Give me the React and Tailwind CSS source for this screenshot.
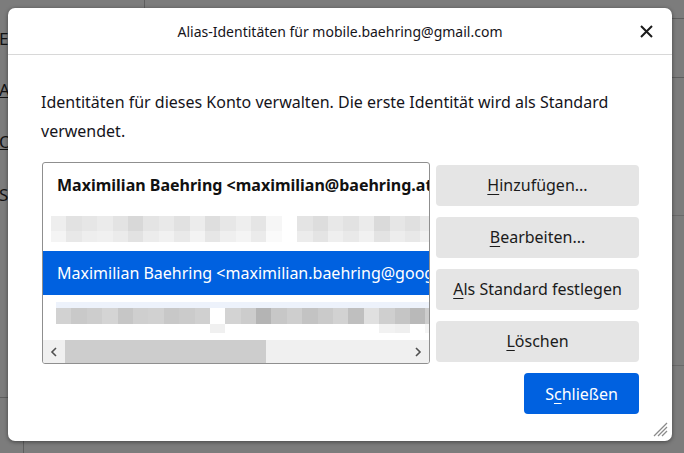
import React from "react";

const font = { fontFamily: '"Noto Sans", "Open Sans", sans-serif' };

const row2a = ["bg-[#eeeeee]","bg-[#e2e2e2]","bg-[#e6e6e6]","bg-[#ebebeb]","bg-[#e3e3e3]","bg-[#d8d8d8]","bg-[#e4e4e4]","bg-[#e9e9e9]","bg-[#e1e1e1]","bg-[#ececec]","bg-[#dedede]","bg-[#e7e7e7]","bg-[#eeeeee]","bg-[#e5e5e5]","bg-[#f6f6f6]","bg-[#ffffff]","bg-[#e4e4e4]","bg-[#dddddd]","bg-[#e8e8e8]","bg-[#e2e2e2]","bg-[#ebebeb]","bg-[#dadada]","bg-[#e6e6e6]","bg-[#e0e0e0]","bg-[#e9e9e9]"];
const row2b = ["bg-[#f4f4f4]","bg-[#e8e8e8]","bg-[#eeeeee]","bg-[#f0f0f0]","bg-[#ebebeb]","bg-[#e2e2e2]","bg-[#ececec]","bg-[#f1f1f1]","bg-[#e9e9e9]","bg-[#f3f3f3]","bg-[#e6e6e6]","bg-[#efefef]","bg-[#f4f4f4]","bg-[#ebebeb]","bg-[#fafafa]","bg-[#ffffff]","bg-[#ececec]","bg-[#e4e4e4]","bg-[#efefef]","bg-[#e9e9e9]","bg-[#f1f1f1]","bg-[#e3e3e3]","bg-[#ededed]","bg-[#e8e8e8]","bg-[#f0f0f0]"];
const row4a = ["bg-[#d2d2d2]","bg-[#c9c9c9]","bg-[#cdcdcd]","bg-[#d4d4d4]","bg-[#c6c6c6]","bg-[#cfcfcf]","bg-[#d1d1d1]","bg-[#c8c8c8]","bg-[#cbcbcb]","bg-[#d0d0d0]","bg-[#ffffff]","bg-[#d3d3d3]","bg-[#cccccc]","bg-[#b4b4b4]","bg-[#c7c7c7]","bg-[#cecece]","bg-[#c3c3c3]","bg-[#cacaca]","bg-[#d2d2d2]","bg-[#bfbfbf]","bg-[#e0e0e0]","bg-[#cfcfcf]","bg-[#c5c5c5]","bg-[#b9b9b9]","bg-[#cdcdcd]"];
const row4b = ["bg-[#ffffff]","bg-[#ffffff]","bg-[#ffffff]","bg-[#ffffff]","bg-[#ffffff]","bg-[#ffffff]","bg-[#ffffff]","bg-[#ffffff]","bg-[#ffffff]","bg-[#ffffff]","bg-[#f0f0f0]","bg-[#ffffff]","bg-[#ffffff]","bg-[#ffffff]","bg-[#ffffff]","bg-[#ffffff]","bg-[#ffffff]","bg-[#ffffff]","bg-[#ffffff]","bg-[#ffffff]","bg-[#ffffff]","bg-[#f2f2f2]","bg-[#efefef]","bg-[#ffffff]","bg-[#f5f5f5]"];

function Blocks({ shades, h }) {
  return (
    <div className={`flex ${h}`}>
      {shades.map((c, i) => (
        <div key={i} className={`w-[15.4px] shrink-0 ${c}`} />
      ))}
    </div>
  );
}

function Btn({ k, rest }) {
  return (
    <button className="h-[41px] w-full rounded-[4px] bg-[#e5e5e5] text-[16px] text-[#1b1b1b]" style={font}>
      <span className="underline underline-offset-[3px] decoration-1">{k}</span>
      {rest}
    </button>
  );
}

export default function App() {
  return (
    <div className="relative w-[684px] h-[453px] overflow-hidden bg-[#7c7c7c]" style={font}>
      {/* background window fragments */}
      <div className="absolute left-[144px] top-0 h-[8px] w-px bg-[#5e5e5e]" />
      <div className="absolute left-[672px] top-[18px] h-px w-[12px] bg-[#5e5e5e]" />
      <div className="absolute left-[672px] top-[77px] h-px w-[12px] bg-[#5e5e5e]" />
      <div className="absolute left-[672px] top-[215px] h-px w-[12px] bg-[#6a6a6a]" />
      <div className="absolute left-[672px] top-[365px] h-px w-[12px] bg-[#6a6a6a]" />
      <div className="absolute left-0 top-[397px] h-px w-[8px] bg-[#5e5e5e]" />
      <div className="absolute left-[23px] top-[441px] h-[12px] w-px bg-[#5e5e5e]" />
      <div className="absolute left-[-1px] top-[30px] text-[17px] leading-none text-[#111]">E-Mail</div>
      <div className="absolute left-[-1px] top-[81px] text-[17px] leading-none text-[#111] underline">Alle</div>
      <div className="absolute left-[-1px] top-[133px] text-[17px] leading-none text-[#111] underline">Ok</div>
      <div className="absolute left-[-1px] top-[186px] text-[17px] leading-none text-[#111]">Si</div>

      {/* dialog */}
      <div className="absolute left-[8px] top-[8px] w-[664px] h-[433px] rounded-[7px] bg-white shadow-[0_1px_4px_rgba(0,0,0,0.45)] flex flex-col">
        <div className="relative h-[47px] shrink-0 border-b border-[#d8d8d8] flex items-center justify-center">
          <span className="text-[14px] text-[#15141a]">Alias-Identitäten für mobile.baehring@gmail.com</span>
          <svg className="absolute right-[19px] top-[17px]" width="13" height="13" viewBox="0 0 13 13">
            <path d="M1 1 L12 12 M12 1 L1 12" stroke="#1b1b1b" strokeWidth="2" strokeLinecap="butt" />
          </svg>
        </div>
        <div className="px-[33px] pt-[33px] flex flex-col">
          <p className="text-[16px] leading-[29px] text-[#15141a]">
            Identitäten für dieses Konto verwalten. Die erste Identität wird als Standard verwendet.
          </p>
          <div className="mt-[16px] flex gap-[6px] items-center">
            <div className="ml-px w-[388px] h-[202px] shrink-0 rounded-[3px] border border-[#8f8f8f] overflow-hidden flex flex-col">
              <div className="h-[44px] shrink-0 flex items-center pl-[14px] whitespace-nowrap overflow-hidden font-bold text-[16px] text-[#111]">
                Maximilian Baehring &lt;maximilian@baehring.at&gt;
              </div>
              <div className="h-[44px] shrink-0 pl-[8px] pt-[9px] overflow-hidden">
                <Blocks shades={row2a} h="h-[15px]" />
                <Blocks shades={row2b} h="h-[11px]" />
              </div>
              <div className="h-[44px] shrink-0 flex items-center pl-[14px] whitespace-nowrap overflow-hidden text-[16px] text-white bg-[#0061e0]">
                Maximilian Baehring &lt;maximilian.baehring@googlemail.com&gt;
              </div>
              <div className="h-[45px] shrink-0 pl-[13px] pt-[7px] overflow-hidden">
                <div className="h-[6px] bg-[#edf2fb]" />
                <Blocks shades={row4a} h="h-[16px]" />
                <Blocks shades={row4b} h="h-[9px]" />
              </div>
              <div className="h-[23px] shrink-0 flex items-stretch bg-[#f0f0f0]">
                <div className="w-[22px] flex items-center justify-center">
                  <svg width="8" height="10" viewBox="0 0 8 10"><path d="M6 1 L2 5 L6 9" fill="none" stroke="#505050" strokeWidth="1.6" /></svg>
                </div>
                <div className="w-[201px] bg-[#cdcdcd]" />
                <div className="flex-1" />
                <div className="w-[22px] flex items-center justify-center">
                  <svg width="8" height="10" viewBox="0 0 8 10"><path d="M2 1 L6 5 L2 9" fill="none" stroke="#505050" strokeWidth="1.6" /></svg>
                </div>
              </div>
            </div>
            <div className="flex-1 flex flex-col gap-[11px]">
              <Btn k="H" rest="inzufügen..." />
              <Btn k="B" rest="earbeiten..." />
              <Btn k="A" rest="ls Standard festlegen" />
              <Btn k="L" rest="öschen" />
            </div>
          </div>
          <div className="mt-[9px] flex justify-end">
            <button className="h-[41px] w-[115px] rounded-[4px] bg-[#0061e0] text-white text-[16px]" style={font}>
              S<span className="underline underline-offset-[3px] decoration-1">c</span>hließen
            </button>
          </div>
        </div>
        <svg className="absolute right-[4px] bottom-[4px]" width="16" height="16" viewBox="0 0 16 16">
          <path d="M15 2 L2 15 M15 6 L6 15 M15 10 L10 15" stroke="#8a8a8a" strokeWidth="1.3" />
        </svg>
      </div>
    </div>
  );
}
